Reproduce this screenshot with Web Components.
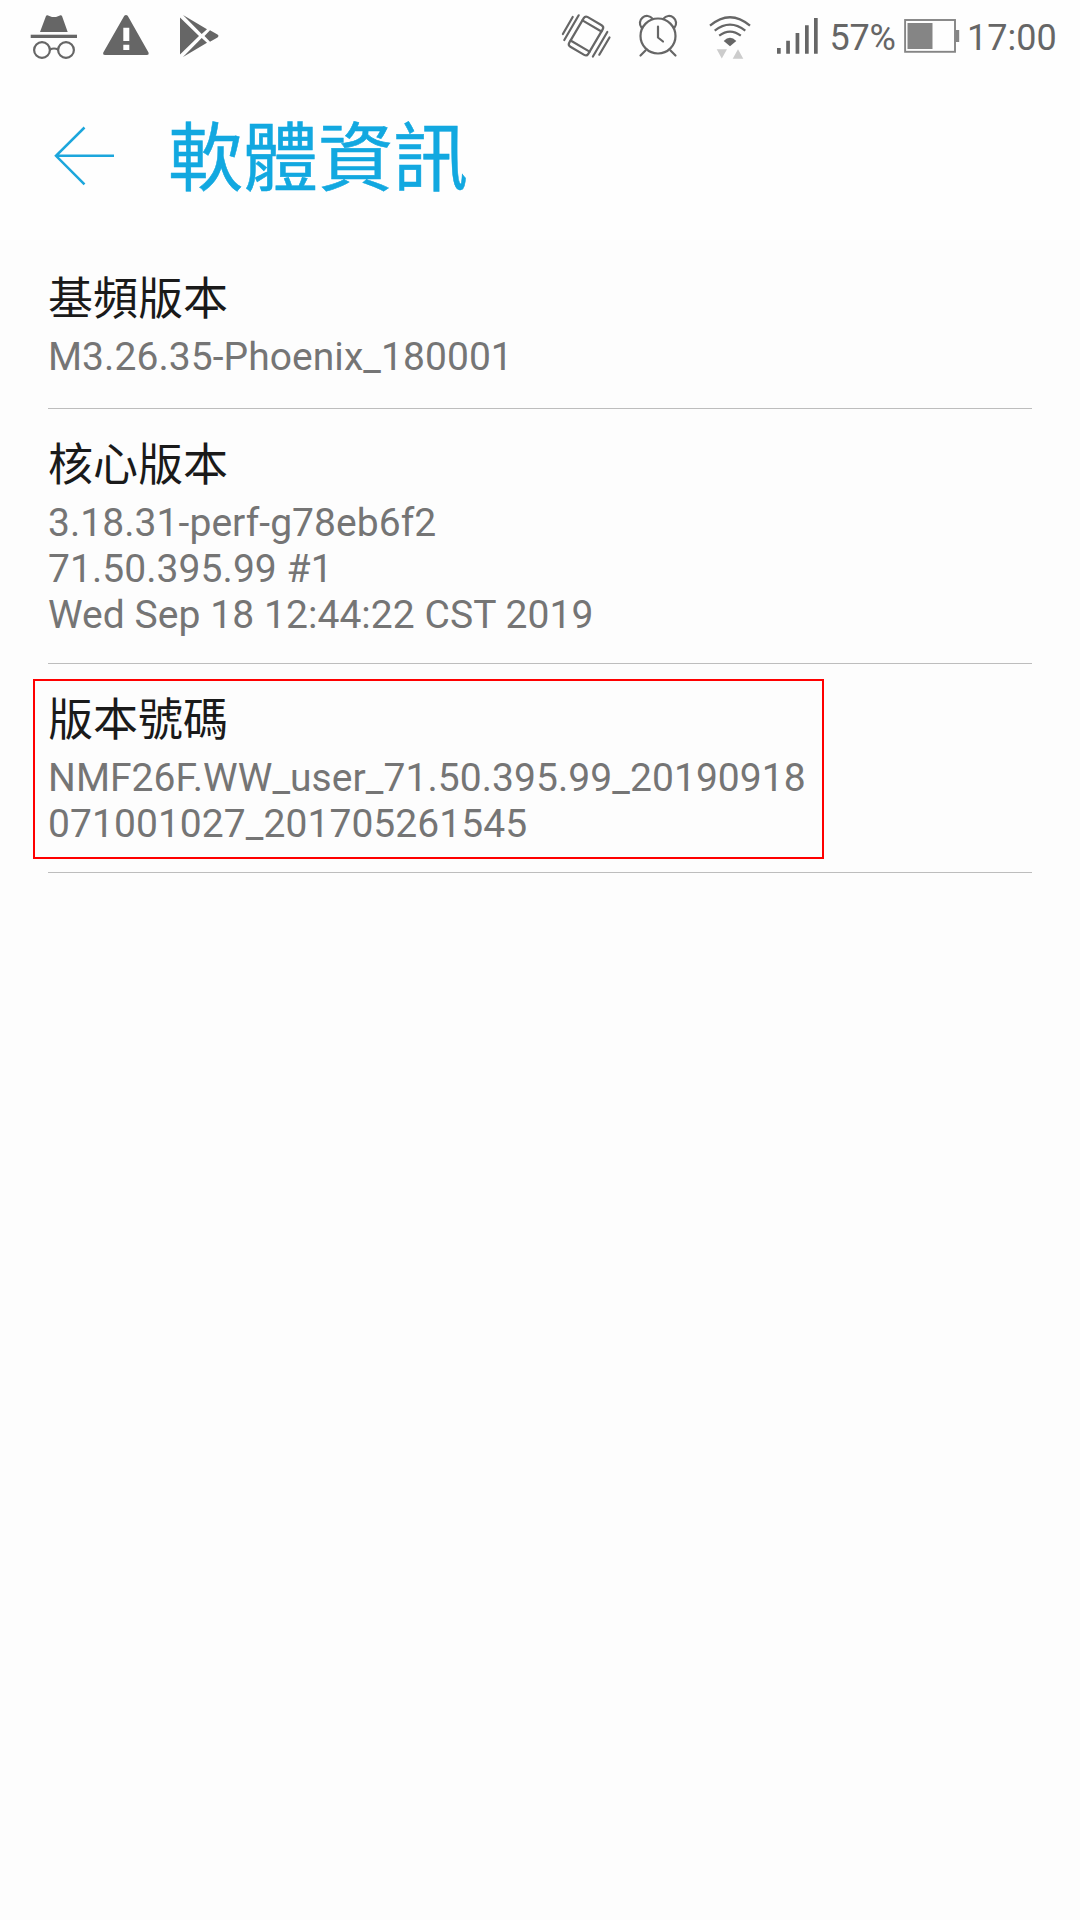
<!DOCTYPE html>
<html lang="zh-Hant">
<head>
<meta charset="utf-8">
<title>軟體資訊</title>
<style>
html, body { margin: 0; background: #fdfdfd; }
body { font-family: Roboto, "Noto Sans CJK TC", sans-serif; }
</style>
</head>
<body>
<about-screen></about-screen>
<script>
const define = (name, html) => customElements.define(name, class extends HTMLElement {
  constructor() {
    super();
    this.attachShadow({ mode: 'open' }).innerHTML = html;
  }
});

define('status-bar', `
<style>
:host { display: flex; height: 72px; justify-content: space-between; color: #666; background: #fefefe; }
div { display: flex; }
.left { padding-left: 28px; }
.left svg + svg { margin-left: 20px; }
.left svg:last-child { margin-left: 24px; }
.right { padding-right: 23px; }
svg { display: block; height: 72px; fill: #666; }
.line { fill: none; stroke: #666; stroke-width: 2.2; stroke-linecap: round; stroke-linejoin: round; }
span { font-size: 36px; line-height: 42px; padding-top: 17px; white-space: pre; width: 67px; letter-spacing: -0.2px; }
.time { width: 90px; letter-spacing: 0; }
</style>
<div class="left">
  <svg width="52" viewBox="28 0 52 72">
    <path d="M40 32L46 16Q46.500 15 47.500 15.200L50 16.200Q54 18 58 16.200L60.500 15.200Q61.500 15 62 16L67.700 32Z"/>
    <rect x="30.700" y="34.700" width="46.300" height="3.300"/>
    <g class="line"><circle cx="42" cy="50" r="7.900"/><circle cx="66" cy="50" r="7.900"/><path d="M50 49.500Q54 47.500 58 49.500"/></g>
  </svg>
  <svg width="52" viewBox="100 0 52 72">
    <path fill-rule="evenodd" d="M124.300 15.800Q126 14 127.700 15.800L148.500 52.500Q149.200 55 146.800 55H105Q102.600 55 103.300 52.500ZM123.300 27.700V41H129.300V27.700ZM123.300 44.700V50H129.300V44.700Z"/>
  </svg>
  <svg width="44" viewBox="176 0 44 72">
    <path d="M180 17.500L199 36L180 54.500ZM183 15L207 29.200L201.700 34ZM183 57L207 42.800L201.700 38ZM204.500 36L210 30.200L217.500 34.600Q219.500 36 217.500 37.400L210 41.800Z"/>
  </svg>
</div>
<div class="right">
  <svg width="54" viewBox="560 0 54 72"><g class="line">
    <g transform="rotate(30.500 586 36)"><rect x="575" y="18.800" width="22" height="34.400" rx="3"/><path d="M575 24.300H597M575 47.700H597"/></g>
    <path d="M572.700 17L562.900 34M578.700 15.300L564.300 40M607.300 32L592.900 56.500M609.500 37.500L599.300 54.700"/>
  </g></svg>
  <svg width="94" viewBox="614 0 94 72"><g class="line">
    <circle cx="658" cy="36" r="17.500"/>
    <path d="M658 26.500V37.500L663 41.500M645.500 50.500L640.500 55.500M670.500 50.500L675.500 55.500M641.500 27.500A7 7 0 1 1 652.500 18.600M674.500 27.500A7 7 0 1 0 663.500 18.600"/>
  </g></svg>
  <svg width="62" viewBox="708 0 62 72">
    <path class="line" style="stroke-linecap:butt" d="M710 25.700Q730 8.800 750 25.700M714.700 30.700Q730 18.700 745.300 30.700M719.200 35.700Q730 27.500 740.800 35.700"/>
    <path d="M723.700 41Q730 34.500 736.300 41L730 46.200Z"/>
    <path fill="#ccc" d="M716.700 49.300H727L721.800 58.500ZM732.700 58.700H743.300L738 49.300Z"/>
  </svg>
  <svg width="59.500" viewBox="770 0 59.500 72">
    <path d="M777 48H780.700V53.700H777ZM786.200 40.700H789.900V53.700H786.200ZM795.600 33H799.300V53.700H795.600ZM805 25.300H808.700V53.700H805ZM814 18H817.700V53.700H814Z"/>
  </svg>
  <span>57%</span>
  <svg width="70.500" viewBox="896.500 0 70.500 72" style="fill:#858585">
    <rect x="904.600" y="20" width="49.900" height="31.800" fill="none" stroke="#858585" stroke-width="1.900"/>
    <path d="M907 23H932V49H907ZM955 30H958.700V42H955Z"/>
  </svg>
  <span class="time">17:00</span>
</div>`);

define('app-header', `
<style>
:host { display: flex; height: 168px; align-items: center; padding-left: 48px; background: #fefefe; color: #12a8e0; }
svg { display: block; margin-right: 48px; }
h1 { margin: 6px 0 0; font-size: 75px; font-weight: 400; line-height: 108px; -webkit-text-stroke: 0.5px currentColor; }
</style>
<svg width="72" height="72" viewBox="48 120 72 72" fill="none" stroke="#1ca6dc" stroke-width="2.500"><path d="M114 155.800H56M84.500 127.500L56 155.800L84.500 184.300"/></svg>
<h1><slot></slot></h1>`);

define('info-row', `
<style>
:host { display: flex; flex-direction: column; justify-content: center; position: relative; box-sizing: border-box;
  min-height: 169px; padding: 24px 0 25px; margin: 0 48px; border-bottom: 1px solid #bdbdbd; }
.title { font-size: 45px; line-height: 66px; color: #1a1a1a; margin-bottom: 1px; }
.value { font-size: 39px; line-height: 46px; color: #757575; white-space: nowrap; letter-spacing: 0.06px; }
:host([marked])::after { content: ""; position: absolute; box-sizing: border-box; left: -15px; top: 15px; width: 791px; height: 180px; border: 2px solid #f00; }
</style>
<div class="title"><slot name="title"></slot></div>
<div class="value"><slot></slot></div>`);

define('about-screen', `
<style>:host { display: flex; flex-direction: column; width: 1080px; height: 1920px; background: #fdfdfd; }</style>
<status-bar></status-bar>
<app-header>軟體資訊</app-header>
<info-row><span slot="title">基頻版本</span>M3.26.35-Phoenix_180001</info-row>
<info-row><span slot="title">核心版本</span>3.18.31-perf-g78eb6f2<br>71.50.395.99 #1<br>Wed Sep 18 12:44:22 CST 2019</info-row>
<info-row marked><span slot="title">版本號碼</span>NMF26F.WW_user_71.50.395.99_20190918<br>071001027_201705261545</info-row>`);
</script>
</body>
</html>
